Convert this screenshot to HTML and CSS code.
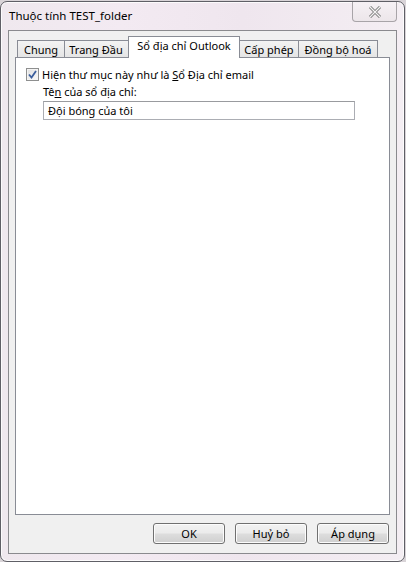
FILE: index.html
```html
<!DOCTYPE html>
<html>
<head>
<meta charset="utf-8">
<link rel="stylesheet" href="styles.css">
</head>
<body>
<div class="window">
  <div class="titlebar">
    <span class="title">Thuộc tính TEST_folder</span>
    <div class="close">
      <svg width="14" height="12" viewBox="0 0 14 12">
        <path d="M2 1 L12 11 M12 1 L2 11" stroke="#7a7a7a" stroke-width="3" fill="none"/>
        <path d="M2 1 L12 11 M12 1 L2 11" stroke="#f4f4f4" stroke-width="1.2" fill="none"/>
      </svg>
    </div>
  </div>
  <div class="client">
    <div class="tabs">
      <div class="tab t-chung">Chung</div>
      <div class="tab t-trang">Trang Đầu</div>
      <div class="tab active t-so">Sổ địa chỉ Outlook</div>
      <div class="tab t-cap">Cấp phép</div>
      <div class="tab t-dong">Đồng bộ hoá</div>
    </div>
    <div class="panel">
      <label class="check-row">
        <span class="checkbox">
          <svg width="9" height="9" viewBox="0 0 9 9"><path d="M1 4.5 L3.5 7.5 L8 1" stroke="#3a5d9c" stroke-width="1.8" fill="none"/></svg>
        </span>
        <span>Hiện thư mục này như là <u>S</u>ổ Địa chỉ email</span>
      </label>
      <div class="field">
        <div class="field-label">Tê<u>n</u> của sổ địa chỉ:</div>
        <div class="input">Đội bóng của tôi</div>
      </div>
    </div>
    <div class="buttons">
      <div class="btn">OK</div>
      <div class="btn">Huỷ bỏ</div>
      <div class="btn">Áp dụn<u>g</u></div>
    </div>
  </div>
</div>
</body>
</html>
```
FILE: styles.css
```css
* { box-sizing: border-box; }
html, body {
  margin: 0;
  padding: 0;
  width: 406px;
  height: 562px;
  overflow: hidden;
  background: #d9d4d8;
  font-family: "Segoe UI", "Noto Sans", "Open Sans", sans-serif;
  font-size: 11px;
  color: #000;
}
.window {
  width: 405px;
  height: 561px;
  margin-top: 1px;
  border: 1px solid #5f5f66;
  border-radius: 7px;
  background: linear-gradient(90deg, #efe8ee 0%, #f3eaf2 30%, #efe6ee 60%, #f4eef3 100%);
  box-shadow: inset 0 0 0 1px rgba(255,255,255,0.8);
  display: flex;
  flex-direction: column;
}
.titlebar {
  height: 28px;
  display: flex;
  align-items: flex-start;
  justify-content: space-between;
  padding-left: 8px;
}
.title {
  margin-top: 6px;
  line-height: 16px;
  font-size: 11.5px;
}
.close {
  width: 45px;
  height: 20px;
  margin-right: 7px;
  border: 1px solid #a8a4a8;
  border-top: none;
  border-radius: 0 0 4px 4px;
  background: linear-gradient(#f6f1f5, #ece6ea);
  display: flex;
  align-items: center;
  justify-content: center;
}
.client {
  margin: 0 7px 7px 7px;
  flex: 1;
  border: 1px solid #8a8a8e;
  background: #f0f0f0;
  padding: 6px 6px 0 6px;
  display: flex;
  flex-direction: column;
}
.tabs {
  height: 20px;
  display: flex;
  align-items: flex-end;
  padding-left: 2px;
  position: relative;
  z-index: 1;
}
.tab {
  height: 17px;
  line-height: 17px;
  border: 1px solid #898c95;
  border-bottom: none;
  margin-right: -1px;
  background: linear-gradient(#f3f3f3, #e5e5e5);
  white-space: nowrap;
  text-align: center;
}
.t-chung { width: 48px; }
.t-trang { width: 67px; padding-right: 3px; }
.t-so { width: 112px; }
.t-cap { width: 60px; }
.t-dong { width: 80px; }
.tab.active {
  height: 22px;
  line-height: 18px;
  margin: 0 -1px -1px -2px;
  background: #fff;
  position: relative;
  z-index: 2;
}
.panel {
  height: 458px;
  border: 1px solid #898c95;
  background: #fff;
  padding: 9px 10px 0 10px;
}
.check-row {
  display: flex;
  align-items: center;
  height: 15px;
  gap: 3px;
}
.checkbox {
  width: 13px;
  height: 13px;
  border: 1px solid #8e8f8f;
  background: linear-gradient(135deg, #e0e0e0, #f8f8f8);
  display: flex;
  align-items: center;
  justify-content: center;
  box-shadow: inset 0 0 0 1px #f4f4f4;
}
.field {
  padding-left: 17px;
  padding-top: 1px;
}
.field-label {
  line-height: 17px;
}
.input {
  width: 312px;
  height: 19px;
  margin-top: 1px;
  border: 1px solid #abadb3;
  border-top-color: #999b9f;
  padding: 0 4px;
  line-height: 17px;
}
.buttons {
  display: flex;
  justify-content: flex-end;
  gap: 10px;
  margin-top: 8px;
  padding-right: 1px;
}
.btn {
  width: 72px;
  height: 21px;
  border: 1px solid #707070;
  border-radius: 3px;
  background: linear-gradient(#f2f2f2 0%, #ebebeb 48%, #dddddd 52%, #cfcfcf 100%);
  box-shadow: inset 0 0 0 1px #fcfcfc;
  text-align: center;
  line-height: 19px;
}
u { text-decoration: underline; text-underline-offset: 1px; }
```
